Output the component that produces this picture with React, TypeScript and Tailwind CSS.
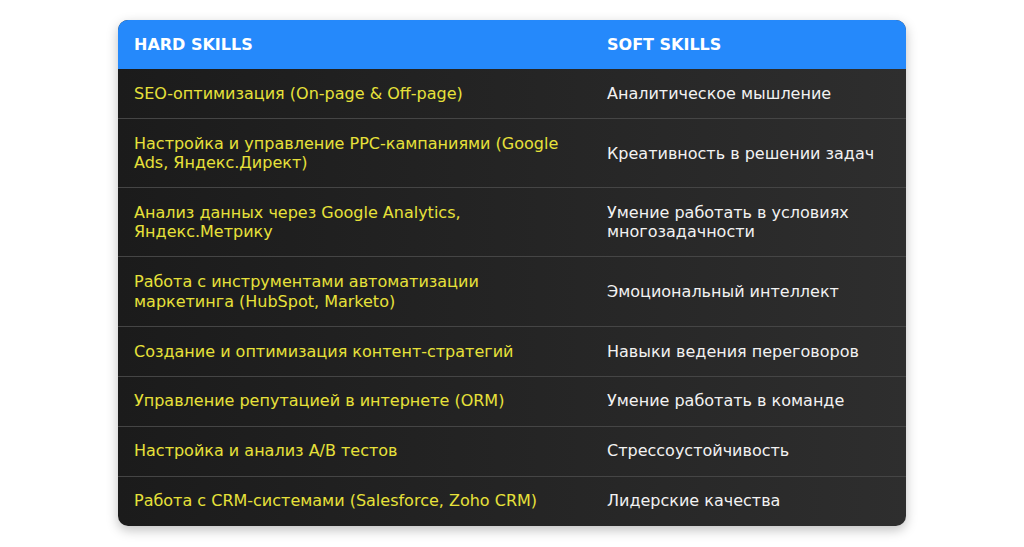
import React from "react";

interface Row {
  hard: string;
  soft: string;
}

const rows: Row[] = [
  { hard: "SEO-оптимизация (On-page & Off-page)", soft: "Аналитическое мышление" },
  {
    hard: "Настройка и управление PPC-кампаниями (Google Ads, Яндекс.Директ)",
    soft: "Креативность в решении задач",
  },
  {
    hard: "Анализ данных через Google Analytics, Яндекс.Метрику",
    soft: "Умение работать в условиях многозадачности",
  },
  {
    hard: "Работа с инструментами автоматизации маркетинга (HubSpot, Marketo)",
    soft: "Эмоциональный интеллект",
  },
  { hard: "Создание и оптимизация контент-стратегий", soft: "Навыки ведения переговоров" },
  { hard: "Управление репутацией в интернете (ORM)", soft: "Умение работать в команде" },
  { hard: "Настройка и анализ A/B тестов", soft: "Стрессоустойчивость" },
  { hard: "Работа с CRM-системами (Salesforce, Zoho CRM)", soft: "Лидерские качества" },
];

function App() {
  return (
    <div className="min-h-[547px] w-full bg-white pt-5 font-[family-name:'DejaVu_Sans',sans-serif]">
      <div className="mx-auto w-[788px] overflow-hidden rounded-[10px] bg-gradient-to-r from-[#1b1b1b] to-[#2e2e2e] shadow-[0_4px_12px_rgba(0,0,0,0.25)]">
        <div className="grid grid-cols-[473px_1fr] bg-[#2589fb] text-[16px] leading-[1.2] font-bold text-white">
          <div className="px-4 py-[15px]">HARD SKILLS</div>
          <div className="px-4 py-[15px]">SOFT SKILLS</div>
        </div>
        {rows.map((row, idx) => (
          <div
            key={idx}
            className={
              "grid grid-cols-[473px_1fr] items-center text-[16px] leading-[1.2] " +
              (idx > 0 ? "border-t border-[#454545]" : "")
            }
          >
            <div className="px-4 py-[14.9px] text-[#e7e13a]">{row.hard}</div>
            <div className="px-4 py-[14.9px] text-[#f2f2f2]">{row.soft}</div>
          </div>
        ))}
      </div>
    </div>
  );
}

export default App;
